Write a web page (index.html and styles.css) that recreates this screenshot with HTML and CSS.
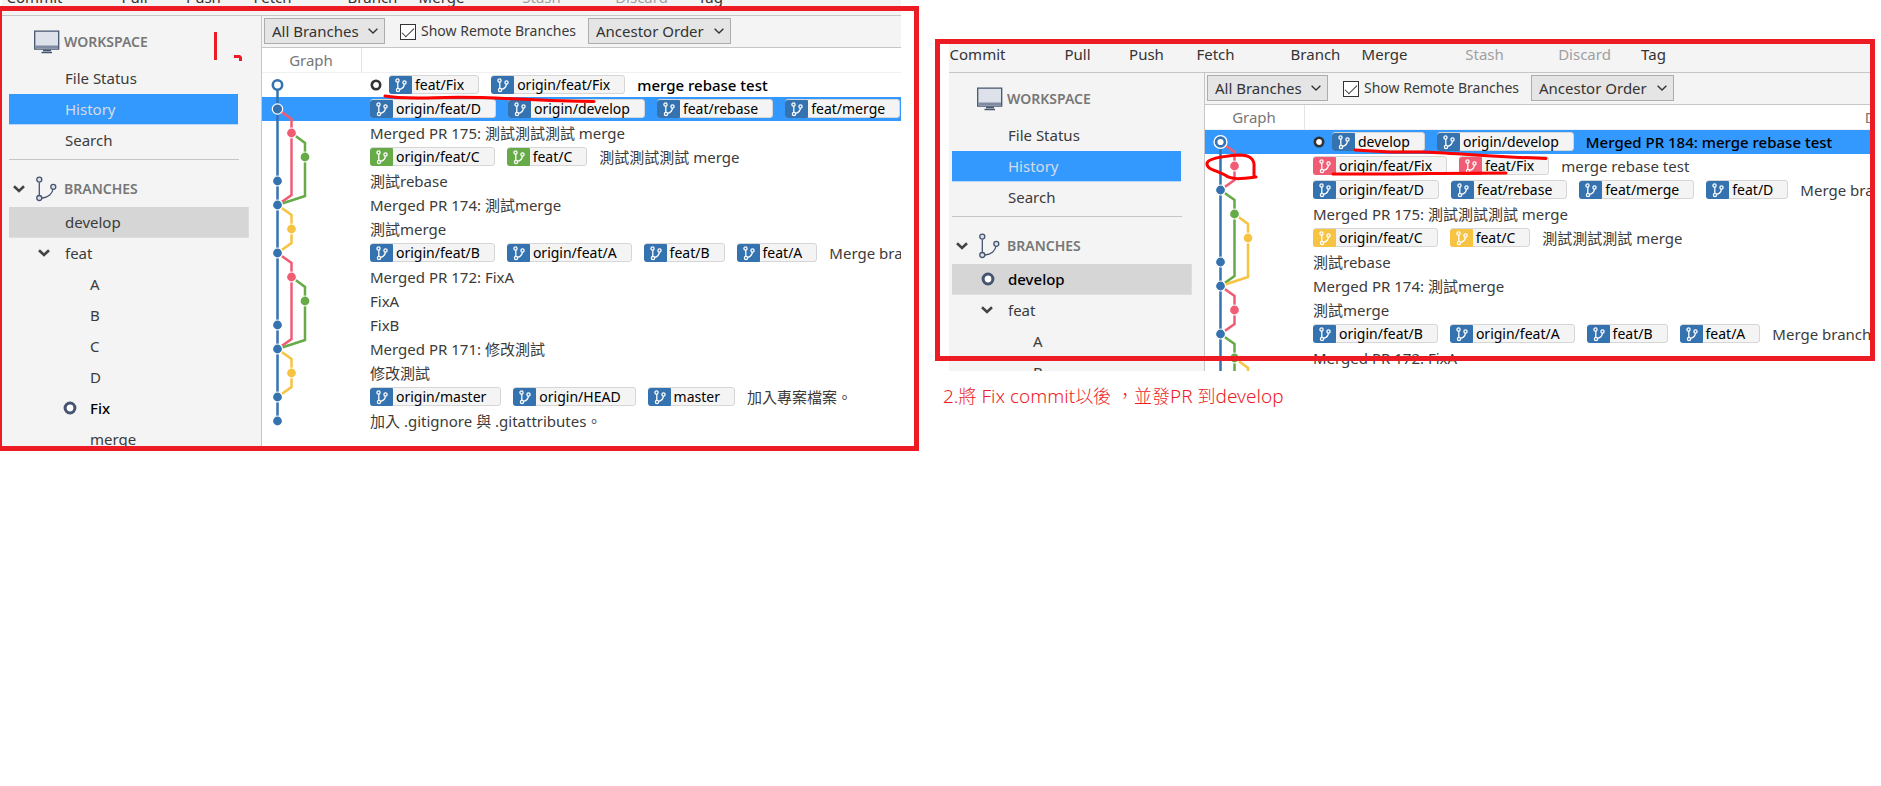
FILE: index.html
```html
<!DOCTYPE html>
<html lang="zh-Hant">
<head>
<meta charset="utf-8">
<title>Fix → develop</title>
<link rel="stylesheet" href="styles.css">
</head>
<body>
<svg class="sprite" aria-hidden="true">
  <symbol id="tag-branch" viewBox="0 0 23 18">
    <g fill="none" stroke="#fff" stroke-width="1.3">
      <circle cx="8.5" cy="4.5" r="1.6"/><circle cx="9" cy="14" r="1.6"/><circle cx="15.5" cy="6.5" r="1.6"/>
      <path d="M8.8 6v6.4M10.6 13.4c3-.8 4.6-2.4 4.8-5.3"/>
    </g>
  </symbol>
  <symbol id="branch" viewBox="0 0 24 26">
    <g fill="#dde1ea" stroke="#45546f" stroke-width="1.3">
      <path fill="none" d="M5.3 6.4v12.8M8 22c6.5-.5 10.5-4.5 11-9"/>
      <circle cx="5.3" cy="3.6" r="2.5"/><circle cx="5.3" cy="22" r="2.5"/><circle cx="19.3" cy="10.8" r="2.5"/>
    </g>
  </symbol>
  <symbol id="monitor" viewBox="0 0 26 23">
    <path fill="#dde1ea" stroke="#45546f" stroke-width="1.3" d="M.7.7h24v18H.7z"/>
    <path fill="#7f8ba3" d="M1.3 15h22.8v2.5H1.3z"/>
    <path stroke="#45546f" stroke-width="1.5" fill="none" d="M9 20h8M7.5 22h10.5"/>
  </symbol>
  <symbol id="twisty" viewBox="0 0 12 8"><path fill="none" stroke="#444" stroke-width="2.6" d="M1 1.3l5 4.7 5-4.7"/></symbol>
  <symbol id="caret" viewBox="0 0 10 6"><path fill="none" stroke="#333" stroke-width="1.4" d="M.6.7L5 5 9.4.7"/></symbol>
  <symbol id="ring" viewBox="0 0 12 12"><circle cx="6" cy="6" r="4.2" fill="#fff" stroke="currentColor" stroke-width="2.6"/></symbol>
</svg>

<main class="board">
  <section class="step">
    <div class="snap snap-first">
      <div class="shot">
        <div class="app">
          <nav class="toolbar">
            <button>Commit</button><button class="gap">Pull</button><button>Push</button><button>Fetch</button><button class="gap">Branch</button><button>Merge</button><button class="gap" disabled>Stash</button><button class="gap" disabled>Discard</button><button>Tag</button>
          </nav>
          <div class="body">
            <aside class="sidebar">
              <h2 class="head"><svg class="icon"><use href="#monitor"/></svg>WORKSPACE</h2>
              <a class="item" href="#">File Status</a>
              <a class="item chosen" href="#">History</a>
              <a class="item" href="#">Search</a>
              <hr>
              <h2 class="head head-tree"><svg class="twisty"><use href="#twisty"/></svg><svg class="icon"><use href="#branch"/></svg>BRANCHES</h2>
              <a class="item marked" href="#">develop</a>
              <a class="item" href="#"><svg class="twisty"><use href="#twisty"/></svg>feat</a>
              <a class="item deep" href="#">A</a>
              <a class="item deep" href="#">B</a>
              <a class="item deep" href="#">C</a>
              <a class="item deep" href="#">D</a>
              <a class="item deep current" href="#"><svg class="dot"><use href="#ring"/></svg>Fix</a>
              <a class="item deep" href="#">merge</a>
            </aside>
            <div class="log">
              <form class="filters">
                <span class="drop drop-a"><select aria-label="Branches"><option>All Branches</option></select><svg><use href="#caret"/></svg></span>
                <label class="check"><input type="checkbox" checked>Show Remote Branches</label>
                <span class="drop drop-b"><select aria-label="Order"><option>Ancestor Order</option></select><svg><use href="#caret"/></svg></span>
              </form>
              <div class="history">
                <table>
                  <thead><tr><th class="col-graph">Graph</th><th>Description</th></tr></thead>
                  <tbody>
                    <tr class="top"><td></td><td><div class="row"><svg class="head-dot"><use href="#ring"/></svg><span class="tag"><svg><use href="#tag-branch"/></svg>feat/Fix</span><span class="tag"><svg><use href="#tag-branch"/></svg>origin/feat/Fix</span><span>merge rebase test</span></div></td></tr>
                    <tr class="selected"><td></td><td><div class="row"><span class="tag"><svg><use href="#tag-branch"/></svg>origin/feat/D</span><span class="tag"><svg><use href="#tag-branch"/></svg>origin/develop</span><span class="tag"><svg><use href="#tag-branch"/></svg>feat/rebase</span><span class="tag"><svg><use href="#tag-branch"/></svg>feat/merge</span></div></td></tr>
                    <tr><td></td><td><div class="row"><span>Merged PR 175: 測試測試測試 merge</span></div></td></tr>
                    <tr><td></td><td><div class="row"><span class="tag green"><svg><use href="#tag-branch"/></svg>origin/feat/C</span><span class="tag green"><svg><use href="#tag-branch"/></svg>feat/C</span><span>測試測試測試 merge</span></div></td></tr>
                    <tr><td></td><td><div class="row"><span>測試rebase</span></div></td></tr>
                    <tr><td></td><td><div class="row"><span>Merged PR 174: 測試merge</span></div></td></tr>
                    <tr><td></td><td><div class="row"><span>測試merge</span></div></td></tr>
                    <tr><td></td><td><div class="row"><span class="tag"><svg><use href="#tag-branch"/></svg>origin/feat/B</span><span class="tag"><svg><use href="#tag-branch"/></svg>origin/feat/A</span><span class="tag"><svg><use href="#tag-branch"/></svg>feat/B</span><span class="tag"><svg><use href="#tag-branch"/></svg>feat/A</span><span>Merge branch</span></div></td></tr>
                    <tr><td></td><td><div class="row"><span>Merged PR 172: FixA</span></div></td></tr>
                    <tr><td></td><td><div class="row"><span>FixA</span></div></td></tr>
                    <tr><td></td><td><div class="row"><span>FixB</span></div></td></tr>
                    <tr><td></td><td><div class="row"><span>Merged PR 171: 修改測試</span></div></td></tr>
                    <tr><td></td><td><div class="row"><span>修改測試</span></div></td></tr>
                    <tr><td></td><td><div class="row"><span class="tag"><svg><use href="#tag-branch"/></svg>origin/master</span><span class="tag"><svg><use href="#tag-branch"/></svg>origin/HEAD</span><span class="tag"><svg><use href="#tag-branch"/></svg>master</span><span>加入專案檔案。</span></div></td></tr>
                    <tr><td></td><td><div class="row"><span>加入 .gitignore 與 .gitattributes。</span></div></td></tr>
                  </tbody>
                </table>
                <svg class="graph" viewBox="0 0 100 360">
                  <g class="lines">
                    <path class="blue" d="M15.5 17V348"/>
                    <path class="pink" d="M15.5 36L29.5 46V122L15.5 132M15.5 180L29.5 190V266L15.5 276"/>
                    <path class="green" d="M29.5 60L43 70V123L15.5 132M29.5 204L43 214V267L15.5 276"/>
                    <path class="yellow" d="M15.5 132L29.5 142V170L15.5 180M15.5 276L29.5 286V314L15.5 324"/>
                  </g>
                  <g class="nodes">
                    <circle class="open" cx="15.5" cy="12" r="4.7"/>
                    <circle class="blue" cx="15.5" cy="36" r="5.2"/>
                    <circle class="pink" cx="29.5" cy="60" r="5"/><circle class="green" cx="43" cy="84" r="5"/>
                    <circle class="blue" cx="15.5" cy="108" r="5"/><circle class="blue" cx="15.5" cy="132" r="5"/>
                    <circle class="yellow" cx="29.5" cy="156" r="5"/><circle class="blue" cx="15.5" cy="180" r="5"/>
                    <circle class="pink" cx="29.5" cy="204" r="5"/><circle class="green" cx="43" cy="228" r="5"/>
                    <circle class="blue" cx="15.5" cy="252" r="5"/><circle class="blue" cx="15.5" cy="276" r="5"/>
                    <circle class="yellow" cx="29.5" cy="300" r="5"/><circle class="blue" cx="15.5" cy="324" r="5"/>
                    <circle class="blue" cx="15.5" cy="348" r="5"/>
                  </g>
                </svg>
              </div>
            </div>
          </div>
        </div>
      </div>
      <div class="frame"></div>
      <svg class="ink" viewBox="0 0 640 120" aria-hidden="true">
        <path class="pen" d="M215.5 32V60M234 56.5H239.500L240.500 57.500V61"/>
        <path class="brush" d="M385 96C400 99 420 98 445 97.500C490 96 530 101 594 101.500"/>
      </svg>
    </div>
  </section>

  <section class="step">
    <div class="snap snap-second">
      <div class="shot">
        <div class="app">
          <nav class="toolbar">
            <button>Commit</button><button class="gap">Pull</button><button>Push</button><button>Fetch</button><button class="gap">Branch</button><button>Merge</button><button class="gap" disabled>Stash</button><button class="gap" disabled>Discard</button><button>Tag</button>
          </nav>
          <div class="body">
            <aside class="sidebar">
              <h2 class="head"><svg class="icon"><use href="#monitor"/></svg>WORKSPACE</h2>
              <a class="item" href="#">File Status</a>
              <a class="item chosen" href="#">History</a>
              <a class="item" href="#">Search</a>
              <hr>
              <h2 class="head head-tree"><svg class="twisty"><use href="#twisty"/></svg><svg class="icon"><use href="#branch"/></svg>BRANCHES</h2>
              <a class="item marked current" href="#"><svg class="dot"><use href="#ring"/></svg>develop</a>
              <a class="item" href="#"><svg class="twisty"><use href="#twisty"/></svg>feat</a>
              <a class="item deep" href="#">A</a>
              <a class="item deep" href="#">B</a>
            </aside>
            <div class="log">
              <form class="filters">
                <span class="drop drop-a"><select aria-label="Branches"><option>All Branches</option></select><svg><use href="#caret"/></svg></span>
                <label class="check"><input type="checkbox" checked>Show Remote Branches</label>
                <span class="drop drop-b"><select aria-label="Order"><option>Ancestor Order</option></select><svg><use href="#caret"/></svg></span>
              </form>
              <div class="history">
                <table>
                  <thead><tr><th class="col-graph">Graph</th><th>Description</th></tr></thead>
                  <tbody>
                    <tr class="top selected"><td></td><td><div class="row"><svg class="head-dot"><use href="#ring"/></svg><span class="tag"><svg><use href="#tag-branch"/></svg>develop</span><span class="tag"><svg><use href="#tag-branch"/></svg>origin/develop</span><span>Merged PR 184: merge rebase test</span></div></td></tr>
                    <tr><td></td><td><div class="row"><span class="tag pink"><svg><use href="#tag-branch"/></svg>origin/feat/Fix</span><span class="tag pink"><svg><use href="#tag-branch"/></svg>feat/Fix</span><span>merge rebase test</span></div></td></tr>
                    <tr><td></td><td><div class="row"><span class="tag"><svg><use href="#tag-branch"/></svg>origin/feat/D</span><span class="tag"><svg><use href="#tag-branch"/></svg>feat/rebase</span><span class="tag"><svg><use href="#tag-branch"/></svg>feat/merge</span><span class="tag"><svg><use href="#tag-branch"/></svg>feat/D</span><span>Merge branch</span></div></td></tr>
                    <tr><td></td><td><div class="row"><span>Merged PR 175: 測試測試測試 merge</span></div></td></tr>
                    <tr><td></td><td><div class="row"><span class="tag yellow"><svg><use href="#tag-branch"/></svg>origin/feat/C</span><span class="tag yellow"><svg><use href="#tag-branch"/></svg>feat/C</span><span>測試測試測試 merge</span></div></td></tr>
                    <tr><td></td><td><div class="row"><span>測試rebase</span></div></td></tr>
                    <tr><td></td><td><div class="row"><span>Merged PR 174: 測試merge</span></div></td></tr>
                    <tr><td></td><td><div class="row"><span>測試merge</span></div></td></tr>
                    <tr><td></td><td><div class="row"><span class="tag"><svg><use href="#tag-branch"/></svg>origin/feat/B</span><span class="tag"><svg><use href="#tag-branch"/></svg>origin/feat/A</span><span class="tag"><svg><use href="#tag-branch"/></svg>feat/B</span><span class="tag"><svg><use href="#tag-branch"/></svg>feat/A</span><span>Merge branch</span></div></td></tr>
                    <tr><td></td><td><div class="row"><span>Merged PR 172: FixA</span></div></td></tr>
                  </tbody>
                </table>
                <svg class="graph" viewBox="0 0 100 360">
                  <g class="lines">
                    <path class="blue" d="M15.5 17V360"/>
                    <path class="pink" d="M15.5 12L29.5 22V50L15.5 60M15.5 156L29.5 166V194L15.5 204"/>
                    <path class="green" d="M15.5 60L29.5 70V146L15.5 156M15.5 204L29.5 214V290"/>
                    <path class="yellow" d="M29.5 84L43 94V147L15.5 156M29.5 228L43 238V290"/>
                  </g>
                  <g class="nodes">
                    <circle class="halo" cx="15.5" cy="12" r="6.5"/>
                    <circle class="open" cx="15.5" cy="12" r="4.4"/>
                    <circle class="pink" cx="29.5" cy="36" r="5"/><circle class="blue" cx="15.5" cy="60" r="5"/>
                    <circle class="green" cx="29.5" cy="84" r="5"/><circle class="yellow" cx="43" cy="108" r="5"/>
                    <circle class="blue" cx="15.5" cy="132" r="5"/><circle class="blue" cx="15.5" cy="156" r="5"/>
                    <circle class="pink" cx="29.5" cy="180" r="5"/><circle class="blue" cx="15.5" cy="204" r="5"/>
                    <circle class="green" cx="29.5" cy="228" r="5"/>
                  </g>
                </svg>
              </div>
            </div>
          </div>
        </div>
      </div>
      <div class="frame"></div>
      <svg class="ink" viewBox="0 0 640 160" aria-hidden="true">
        <path class="brush" d="M272 124C274 119 290 117 304 116C315 116 320 120 319 129V138M321 138C305 140 297 141 290 136C280 131 271 130 272 124"/>
        <path class="brush" d="M420 111L455 113L490 113C530 115 570 118 611 119.500M398 135L450 135C480 135 520 134 571 134"/>
      </svg>
    </div>
    <p class="note">2.<b>將</b> Fix commit<b>以後</b> <b>，並發</b>PR <b>到</b>develop</p>
  </section>
</main>
</body>
</html>
```
FILE: styles.css
```css
* { box-sizing: border-box; }

body {
  margin: 0;
  background: #fff;
  color: #3b3b3b;
  font: 15px/24px "Noto Sans", "Noto Sans CJK TC", sans-serif;
  overflow-x: hidden;
}

.sprite { position: absolute; width: 0; height: 0; }

.board {
  display: grid;
  grid-template-columns: 919fr 946fr;
  column-gap: 16px;
  align-items: start;
}

.step { min-width: 0; }

/* captured window with its red frame */
.snap { position: relative; }
.snap-first { padding: 0 18px 5px 2px; }
.snap-second { margin-top: 39px; padding: 5px 11px 0 14px; }
.shot { overflow: hidden; }
.snap-first .shot { height: 446px; }
.snap-second .shot { height: 327px; }
.snap-first .app { margin-left: -2px; }
.snap-second .app { margin-left: -6px; }

.frame {
  position: absolute;
  border: 5px solid #ed1c24;
  pointer-events: none;
}
.snap-first .frame { inset: 6px 0 0 -3px; }
.snap-second .frame { inset: 0 6px 10px 0; }

.ink {
  position: absolute;
  left: 0;
  top: 0;
  width: 640px;
  fill: none;
  overflow: visible;
  pointer-events: none;
}
.pen { stroke: #ed1c24; stroke-width: 3; }
.brush { stroke: #fe0000; stroke-width: 3; stroke-linecap: round; }

.toolbar {
  display: flex;
  align-items: flex-end;
  height: 29px;
  background: #f4f4f4;
  border-bottom: 1px solid #c6c6c6;
}
.snap-first .toolbar { height: 16px; }
.toolbar button {
  flex: none;
  width: 69px;
  height: 36px;
  padding: 0;
  border: 0;
  background: none;
  color: #333;
  font: inherit;
}
.toolbar .gap { margin-left: 31px; }
.toolbar button:disabled { color: #a0a0a0; }

.body { display: flex; }

.sidebar {
  flex: none;
  width: 262px;
  padding-left: 9px;
  background: #f4f4f4;
  border-right: 1px solid #c6c6c6;
}
.head {
  display: flex;
  align-items: center;
  height: 47px;
  margin: 0;
  padding: 5px 0 0 25px;
  color: #777;
  font-size: 14px;
  font-weight: 600;
}
.head-tree { padding: 10px 0 0 4px; }
.head .icon { width: 26px; height: 24px; margin-right: 4px; }
.head-tree .icon { width: 24px; height: 26px; margin: 0 6px 0 9px; }
.twisty { width: 12px; height: 8px; }
.item {
  display: flex;
  align-items: center;
  height: 31px;
  padding: 0 0 1px 56px;
  color: #3b3b3b;
  text-decoration: none;
}
.item .twisty { margin: 0 15px 0 -27px; }
.item .dot { width: 14px; height: 14px; margin: 0 13px 0 -27px; color: #45546f; }
.deep { padding-left: 81px; }
.current { color: #000; font-weight: 500; }
.chosen {
  width: 229px;
  background: #39f;
  color: #d5dbe4;
  border-bottom: 1px solid #b5d7f8;
}
.marked { width: 240px; background: #d6d6d6; border: 1px solid #dedede; border-width: 0 1px 1px 0; }
.sidebar hr {
  width: 230px;
  height: 1px;
  margin: 3px 0 0;
  border: 0;
  background: #c6c6c6;
}

.log { flex: 1; min-width: 0; background: #fff; }

.filters {
  display: flex;
  align-items: center;
  height: 32px;
  padding: 0 0 1px 2px;
  background: #f4f4f4;
  border-bottom: 1px solid #c6c6c6;
  white-space: nowrap;
}
.drop { display: grid; flex: none; align-items: center; }
.drop-a { width: 121px; }
.drop-b { width: 143px; }
.drop select {
  grid-area: 1 / 1;
  appearance: none;
  width: 100%;
  height: 26px;
  padding: 0 7px;
  border: 1px solid #adadad;
  border-radius: 0;
  background: #e5e5e5;
  color: #333;
  font: inherit;
}
.drop svg {
  grid-area: 1 / 1;
  justify-self: end;
  width: 10px;
  height: 6px;
  margin-right: 7px;
  pointer-events: none;
}
.check {
  display: flex;
  flex: none;
  align-items: center;
  gap: 5px;
  width: 203px;
  padding-left: 15px;
  font-size: 14px;
}
.check input {
  appearance: none;
  display: grid;
  place-items: center;
  flex: none;
  width: 16px;
  height: 16px;
  margin: 2px 0 0;
  border: 1px solid #333;
  background: #fff;
}
.check input:checked::before {
  content: "";
  width: 11px;
  height: 5px;
  margin-top: -3px;
  border: solid #333;
  border-width: 0 0 1px 1px;
  transform: rotate(-45deg);
}

.history { display: grid; align-items: start; }
.history table {
  grid-area: 1 / 1;
  width: 1300px;
  border-collapse: separate;
  border-spacing: 0;
  table-layout: fixed;
}
.history th {
  height: 25px;
  padding: 0;
  border-bottom: 1px solid #f0f0f0;
  color: #777;
  font-weight: 400;
}
.history .col-graph { width: 100px; padding-right: 17px; padding-left: 16px; border-right: 1px solid #e4e4e4; }
.history td { height: 24px; padding: 0; }
.row {
  display: flex;
  align-items: center;
  gap: 12px;
  height: 24px;
  padding: 0 0 1px 8px;
  white-space: nowrap;
}
.top { color: #000; font-weight: 500; }
.selected { background: #39f; }

.head-dot { flex: none; width: 12px; height: 12px; margin-right: -5px; color: #333; }
.tag {
  display: flex;
  align-items: center;
  height: 19px;
  padding-right: 14px;
  border: 1px solid #d6d6d6;
  border-radius: 3px;
  background: #f4f4f4;
  color: #000;
  font-size: 14px;
  font-weight: 400;
}
.tag svg {
  flex: none;
  width: 23px;
  height: 18px;
  margin: 0 3px 0 -1px;
  border-radius: 3px 1px 1px 3px;
  background: #3572b0;
}
.tag.green svg { background: #67ab49; }
.tag.pink svg { background: #f15c75; }
.tag.yellow svg { background: #f6c342; }

.graph {
  grid-area: 1 / 1;
  width: 100px;
  height: 360px;
  margin-top: 25px;
  pointer-events: none;
}
.lines { fill: none; stroke-width: 2.5; }
.lines .blue { stroke: #3572b0; }
.lines .pink { stroke: #f15c75; }
.lines .green { stroke: #67ab49; }
.lines .yellow { stroke: #f6c342; }
.nodes { stroke: #fff; stroke-width: 1.2; }
.nodes .blue { fill: #3572b0; }
.nodes .pink { fill: #f15c75; }
.nodes .green { fill: #67ab49; }
.nodes .yellow { fill: #f6c342; }
.nodes .halo { fill: #fff; }
.nodes .open { fill: #fff; stroke: #3572b0; stroke-width: 2.6; }

.note {
  margin: 13px 0 0 8px;
  color: #ed1c24;
  font-size: 19px;
  font-weight: 300;
}
.note b { font-size: 18px; font-weight: inherit; }
```
